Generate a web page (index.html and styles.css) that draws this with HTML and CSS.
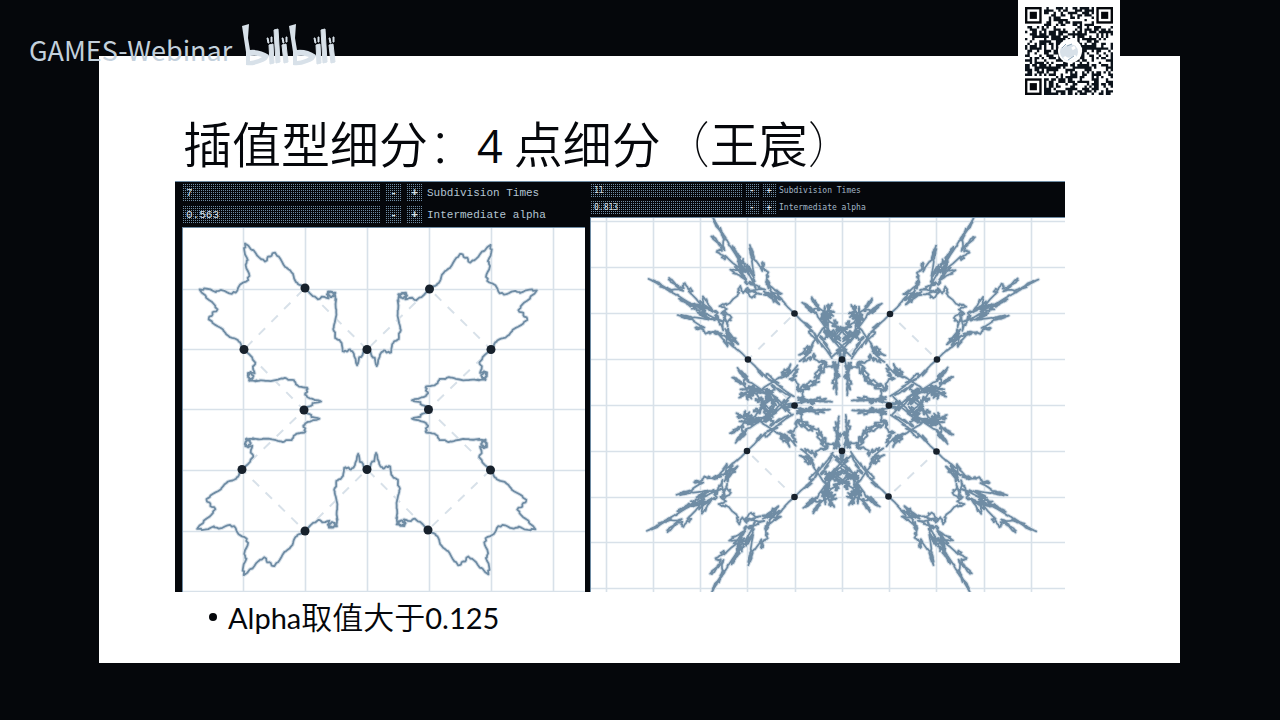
FILE: index.html
```html
<!DOCTYPE html>
<html lang="zh-CN">
<head>
<meta charset="utf-8">
<title>插值型细分</title>
<link rel="stylesheet" href="styles.css">
</head>
<body>
<main class="slide">
  <h1 class="title">插值型细分<span class="punct">：</span><span class="latin">4</span> 点细分<span class="punct">（</span>王宸<span class="punct">）</span></h1>
  <div class="figures">
    <section class="panel panel-a">
      <div class="controls">
        <div class="control">
          <input id="times-a" class="field" type="text" value="7">
          <button class="step" type="button">-</button>
          <button class="step" type="button">+</button>
          <label for="times-a">Subdivision Times</label>
        </div>
        <div class="control">
          <input id="alpha-a" class="field" type="text" value="0.563">
          <button class="step" type="button">-</button>
          <button class="step" type="button">+</button>
          <label for="alpha-a">Intermediate alpha</label>
        </div>
      </div>
      <svg id="plot-a" class="plot" viewBox="182 227 403 365"></svg>
    </section>
    <section class="panel panel-b">
      <div class="controls">
        <div class="control">
          <input id="times-b" class="field" type="text" value="11">
          <button class="step" type="button">-</button>
          <button class="step" type="button">+</button>
          <label for="times-b">Subdivision Times</label>
        </div>
        <div class="control">
          <input id="alpha-b" class="field" type="text" value="0.813">
          <button class="step" type="button">-</button>
          <button class="step" type="button">+</button>
          <label for="alpha-b">Intermediate alpha</label>
        </div>
      </div>
      <svg id="plot-b" class="plot" viewBox="590 217 475 375"></svg>
    </section>
  </div>
  <ul class="notes">
    <li><span class="latin">Alpha</span>取值大于<span class="latin">0.125</span></li>
  </ul>
</main>
<div class="watermark">
  <span>GAMES-Webinar</span>
  <svg class="logo" viewBox="242 23 96 45" width="96" height="45" aria-label="bilibili">
    <defs>
      <g id="half">
        <path d="M242 26L249 24L248 38L250 50Q260 49 269 55Q269 60 260 63Q253 66 246 65L246 52ZM250 56L250 61Q258 60 262 57Q256 55 250 56Z" fill-rule="evenodd"/>
        <path class="bars" d="M269 45l4-1l1 19l-4 1zM274 30l4-1l2 33l-4 1zM282 45l4-1l2 18l-4 1zM267 38l1 0l1 5l-1 0zM271 37l1 0l0 5l-1 0zM282 38l1 0l1 5l-1 0zM286 37l1 0l0 5l-1 0z"/>
      </g>
    </defs>
    <use href="#half"/><use href="#half" x="47"/>
  </svg>
</div>
<svg class="qr" id="qr" viewBox="0 0 102 104" aria-label="QR code"></svg>
<script src="plots.js"></script>
</body>
</html>
```
FILE: styles.css
```css
:root {
  --ink: #05070b;
  --steel: #6f8ca4;
  --mist: #d8e1e9;
}
* { box-sizing: border-box; }
body {
  margin: 0;
  padding: 56px 100px 57px 99px;
  background: var(--ink);
  color: var(--ink);
  font-family: "Lato", "Noto Sans CJK SC", sans-serif;
}
.slide {
  min-height: calc(100vh - 113px);
  padding: 56px 115px 20px 76px;
  background: #fff;
}
.title {
  margin: 0 0 9px;
  padding-left: 8px;
  font: 350 49px/60px "Noto Sans CJK SC", sans-serif;
  white-space: nowrap;
}
.title .punct { font-weight: 100; }
.title .latin {
  font-family: "Open Sans", sans-serif;
  font-weight: 500;
  font-size: 45px;
  line-height: 1;
}
.figures { display: grid; grid-template-columns: 415fr 475fr; }
.panel { min-width: 0; background: var(--ink); border-top: 1px solid var(--steel); }
.panel-a { padding: 0 5px 0 7px; }
.controls {
  display: flex;
  flex-direction: column;
  color: #b4c5d3;
}
.control { display: flex; align-items: center; }
.control label { white-space: nowrap; }
.field, .step {
  margin: 0;
  border: 0;
  color: var(--mist);
  background: conic-gradient(#6f8ca4 25%, var(--ink) 0) 0 0 / 2px 2px;
  font: inherit;
}
.field { padding: 0 4px; min-width: 0; }
.step { padding: 0; font-weight: bold; }
.panel-a .controls { height: 45px; padding-top: 2px; gap: 4px; font: 11px/18px "Liberation Mono", monospace; }
.panel-a .control { gap: 4px; }
.panel-a .field { flex: 0 1 199px; height: 18px; }
.panel-a .step { flex: 0 0 17px; height: 18px; }
.panel-b .controls { height: 35px; padding-top: 2px; gap: 3px; font: 8px/14px "DejaVu Sans Mono", monospace; color: #a3b7c7; }
.panel-b .control { gap: 3px; }
.panel-b .field { flex: 0 1 152px; height: 14px; }
.panel-b .step { flex: 0 0 14px; height: 14px; }
.plot { display: block; width: 100%; background: #fff; }
.grid { stroke: var(--mist); stroke-width: 1.6; fill: none; }
.polygon { stroke: var(--mist); stroke-width: 2; stroke-dasharray: 9 9; fill: none; }
.halo { stroke: var(--mist); fill: none; stroke-linejoin: round; }
.curve { stroke: var(--steel); fill: none; stroke-linejoin: round; }
.node { fill: #17212c; }
.edge { stroke: var(--steel); stroke-width: 2; fill: none; }
.notes {
  margin: 4px 0 0;
  padding-left: 53px;
  font: 350 31px/40px "Noto Sans CJK SC", sans-serif;
  list-style: none;
}
.notes li { position: relative; }
.notes li::before {
  content: "";
  position: absolute;
  left: -19px;
  top: 17px;
  width: 8px;
  height: 8px;
  border-radius: 50%;
  background: var(--ink);
}
.notes .latin { font-family: "Lato", sans-serif; font-weight: 400; font-size: 29px; line-height: 1; }
.watermark {
  position: absolute;
  left: 29px;
  top: 23px;
  display: flex;
  gap: 10px;
  color: #c3d0dc;
  font: 27px/54px "Noto Sans CJK SC", sans-serif;
}
.logo { fill: var(--mist); }
.bars { stroke: var(--mist); stroke-width: 1; }
.qr { position: absolute; top: 0; right: 160px; width: 102px; height: 104px; background: #fff; }
```
FILE: plots.js
```js
const NS = "http://www.w3.org/2000/svg";

function add(parent, tag, attrs) {
  const el = document.createElementNS(NS, tag);
  for (const key in attrs) el.setAttribute(key, attrs[key]);
  parent.appendChild(el);
}

// Four-point interpolatory subdivision of a closed polygon.
function subdivide(points, times, alpha) {
  const w = alpha / 2;
  for (let t = 0; t < times; t++) {
    const n = points.length;
    const next = [];
    for (let i = 0; i < n; i++) {
      const a = points[(i + n - 1) % n], b = points[i];
      const c = points[(i + 1) % n], d = points[(i + 2) % n];
      next.push(b, [0, 1].map(k => (0.5 + w) * (b[k] + c[k]) - w * (a[k] + d[k])));
    }
    points = next;
  }
  return points;
}

const toPath = pts => "M" + pts.map(p => p[0].toFixed(2) + " " + p[1].toFixed(2)).join("L") + "Z";

function plot(id, o) {
  const svg = document.getElementById(id);
  const [x, y, w, h] = svg.getAttribute("viewBox").split(" ").map(Number);
  const grid = o.xs.map(v => `M${v} ${y}V${y + h}`).concat(o.ys.map(v => `M${x} ${v}H${x + w}`)).join("");
  add(svg, "path", { class: "grid", d: grid });
  add(svg, "path", { class: "polygon", d: toPath(o.points) });
  const d = toPath(subdivide(o.points, o.times, o.alpha));
  add(svg, "path", { class: "halo", d, "stroke-width": o.width + 2 });
  add(svg, "path", { class: "curve", d, "stroke-width": o.width });
  for (const p of o.points) add(svg, "circle", { class: "node", cx: p[0], cy: p[1], r: o.radius });
  add(svg, "path", { class: "edge", d: `M${x} ${y + h}V${y}H${x + w}` });
}

plot("plot-a", {
  times: 7, alpha: 0.563, width: 1.8, radius: 4.5,
  xs: [243.5, 305.5, 367.5, 429.5, 491.5, 553.5],
  ys: [289.5, 349.5, 409.5, 470.5, 531.5, 591.5],
  points: [[367, 349.5], [305, 288], [244, 349.5], [304, 410], [242, 469.5], [305, 531],
    [367, 469.5], [428, 530], [490.5, 470], [428.5, 409.5], [491, 349.5], [429.5, 289]]
});

plot("plot-b", {
  times: 11, alpha: 0.813, width: 1.7, radius: 3.3,
  xs: [606.5, 653.5, 700.5, 747.5, 795.5, 842.5, 889.5, 936.5, 984.5, 1031.5],
  ys: [221.5, 267.5, 313.5, 359.5, 405.5, 451.5, 497.5, 542.5, 588.5],
  points: [[842, 359.5], [794.5, 313.5], [748, 359.5], [794.5, 405.5], [747, 451], [794.5, 497],
    [842, 451], [888.5, 496.5], [936.5, 451.5], [889, 405.5], [937, 359.5], [890, 314]]
});

// QR code: 37 by 37 modules with three finder marks and a round emblem.
(function () {
  const svg = document.getElementById("qr");
  const n = 37, s = 88 / n, x0 = 7, y0 = 7;
  let seed = 20517, d = "";
  const corner = (c, r) => (c < 8 || c > 28) && r < 8 || c < 8 && r > 28;
  for (let r = 0; r < n; r++) {
    for (let c = 0; c < n; c++) {
      seed = (seed * 1103515245 + 12345) % 2147483648;
      if (!corner(c, r) && seed / 2147483648 < 0.53) d += `M${x0 + c * s} ${y0 + r * s}h${s}v${s}h${-s}z`;
    }
  }
  add(svg, "path", { d, fill: "#0b121a" });
  for (const [c, r] of [[0, 0], [30, 0], [0, 30]]) {
    const x = x0 + c * s, y = y0 + r * s;
    add(svg, "rect", { x: x + s / 2, y: y + s / 2, width: 6 * s, height: 6 * s, fill: "#fff", stroke: "#05070b", "stroke-width": s });
    add(svg, "rect", { x: x + 2 * s, y: y + 2 * s, width: 3 * s, height: 3 * s, fill: "#05070b" });
  }
  add(svg, "circle", { cx: 52, cy: 51, r: 12, fill: "#fff" });
  add(svg, "circle", { cx: 51, cy: 52, r: 9, fill: "#d8e1e9" });
  add(svg, "path", { d: "M44 47q5-6 14-3M46 57q5 5 12-1M54 49l3-2", fill: "none", stroke: "#fff", "stroke-width": 3 });
  add(svg, "path", { d: "M44 48l4-4M50 60l6-4M49 46l5-2", fill: "none", stroke: "#8fa7ba", "stroke-width": 1 });
})();
```
